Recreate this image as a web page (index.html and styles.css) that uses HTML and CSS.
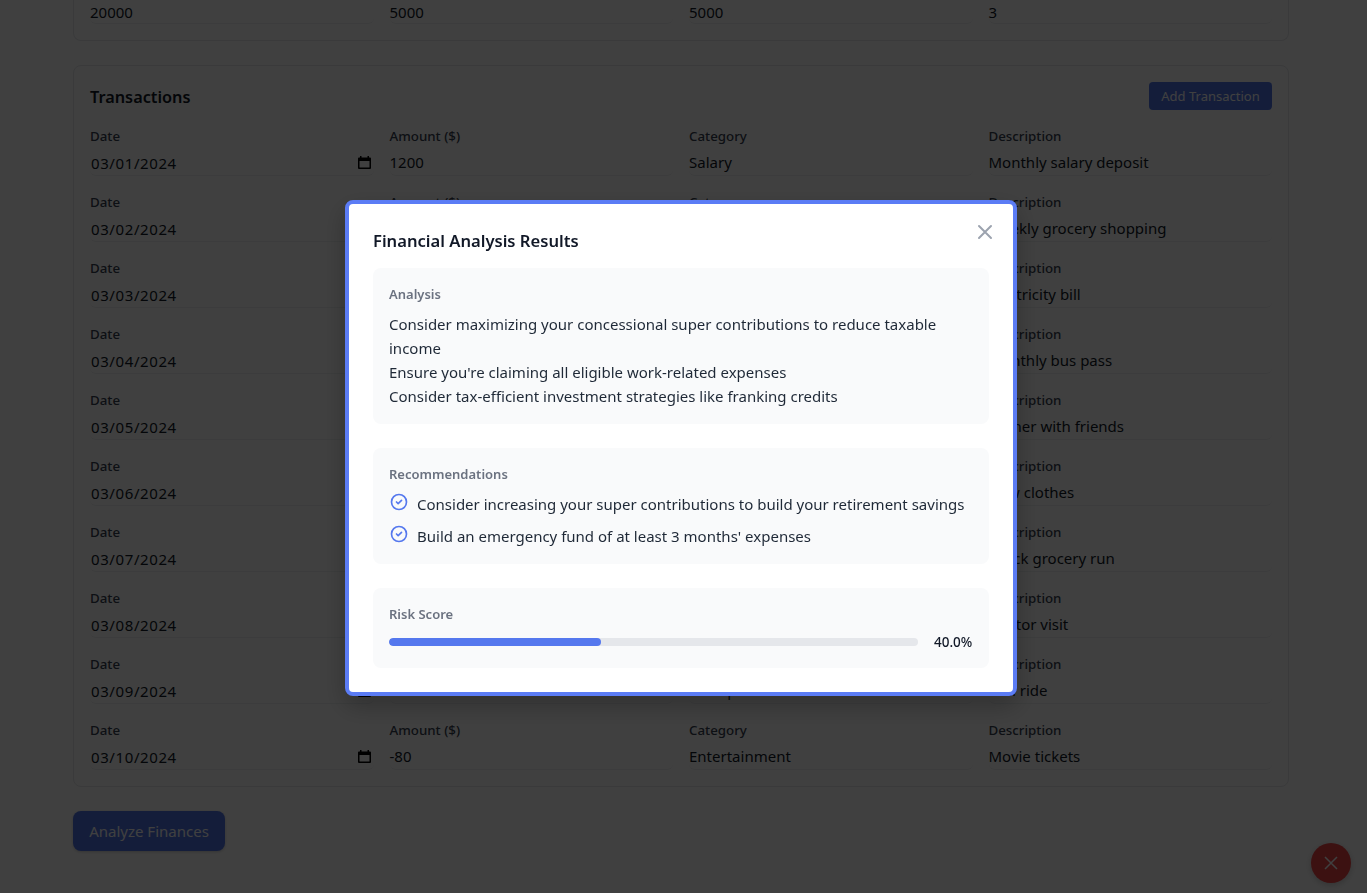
FILE: index.html
```html
<!DOCTYPE html>
<html lang="en">
<head>
<meta charset="utf-8">
<title>Financial Analysis</title>
<link rel="stylesheet" href="styles.css">
</head>
<body>
<main class="page">
  <section class="card card-clipped">
    <div class="grid">
      <div class="input-text">20000</div>
      <div class="input-text">5000</div>
      <div class="input-text">5000</div>
      <div class="input-text">3</div>
    </div>
  </section>

  <section class="card">
    <div class="card-head">
      <h2>Transactions</h2>
      <button class="btn-small">Add Transaction</button>
    </div>
    <div class="rows">
      <div class="grid"><div class="field"><label>Date</label><div class="input-date"><span>03/01/2024</span><svg class="cal" viewBox="0 0 16 16"><path fill-rule="evenodd" d="M4 1h1.5v1.5h6V1H13v1.5h1a1 1 0 0 1 1 1V13a1 1 0 0 1-1 1H3a1 1 0 0 1-1-1V3.5a1 1 0 0 1 1-1h1V1zM3.5 6v6.5h10V6z"/></svg></div></div><div class="field"><label>Amount ($)</label><div class="input-text">1200</div></div><div class="field"><label>Category</label><div class="input-text">Salary</div></div><div class="field"><label>Description</label><div class="input-text">Monthly salary deposit</div></div></div>
      <div class="grid"><div class="field"><label>Date</label><div class="input-date"><span>03/02/2024</span><svg class="cal" viewBox="0 0 16 16"><path fill-rule="evenodd" d="M4 1h1.5v1.5h6V1H13v1.5h1a1 1 0 0 1 1 1V13a1 1 0 0 1-1 1H3a1 1 0 0 1-1-1V3.5a1 1 0 0 1 1-1h1V1zM3.5 6v6.5h10V6z"/></svg></div></div><div class="field"><label>Amount ($)</label><div class="input-text">-150</div></div><div class="field"><label>Category</label><div class="input-text">Groceries</div></div><div class="field"><label>Description</label><div class="input-text">Weekly grocery shopping</div></div></div>
      <div class="grid"><div class="field"><label>Date</label><div class="input-date"><span>03/03/2024</span><svg class="cal" viewBox="0 0 16 16"><path fill-rule="evenodd" d="M4 1h1.5v1.5h6V1H13v1.5h1a1 1 0 0 1 1 1V13a1 1 0 0 1-1 1H3a1 1 0 0 1-1-1V3.5a1 1 0 0 1 1-1h1V1zM3.5 6v6.5h10V6z"/></svg></div></div><div class="field"><label>Amount ($)</label><div class="input-text">-120</div></div><div class="field"><label>Category</label><div class="input-text">Utilities</div></div><div class="field"><label>Description</label><div class="input-text">Electricity bill</div></div></div>
      <div class="grid"><div class="field"><label>Date</label><div class="input-date"><span>03/04/2024</span><svg class="cal" viewBox="0 0 16 16"><path fill-rule="evenodd" d="M4 1h1.5v1.5h6V1H13v1.5h1a1 1 0 0 1 1 1V13a1 1 0 0 1-1 1H3a1 1 0 0 1-1-1V3.5a1 1 0 0 1 1-1h1V1zM3.5 6v6.5h10V6z"/></svg></div></div><div class="field"><label>Amount ($)</label><div class="input-text">-50</div></div><div class="field"><label>Category</label><div class="input-text">Transport</div></div><div class="field"><label>Description</label><div class="input-text">Monthly bus pass</div></div></div>
      <div class="grid"><div class="field"><label>Date</label><div class="input-date"><span>03/05/2024</span><svg class="cal" viewBox="0 0 16 16"><path fill-rule="evenodd" d="M4 1h1.5v1.5h6V1H13v1.5h1a1 1 0 0 1 1 1V13a1 1 0 0 1-1 1H3a1 1 0 0 1-1-1V3.5a1 1 0 0 1 1-1h1V1zM3.5 6v6.5h10V6z"/></svg></div></div><div class="field"><label>Amount ($)</label><div class="input-text">-75</div></div><div class="field"><label>Category</label><div class="input-text">Dining</div></div><div class="field"><label>Description</label><div class="input-text">Dinner with friends</div></div></div>
      <div class="grid"><div class="field"><label>Date</label><div class="input-date"><span>03/06/2024</span><svg class="cal" viewBox="0 0 16 16"><path fill-rule="evenodd" d="M4 1h1.5v1.5h6V1H13v1.5h1a1 1 0 0 1 1 1V13a1 1 0 0 1-1 1H3a1 1 0 0 1-1-1V3.5a1 1 0 0 1 1-1h1V1zM3.5 6v6.5h10V6z"/></svg></div></div><div class="field"><label>Amount ($)</label><div class="input-text">-200</div></div><div class="field"><label>Category</label><div class="input-text">Shopping</div></div><div class="field"><label>Description</label><div class="input-text">New clothes</div></div></div>
      <div class="grid"><div class="field"><label>Date</label><div class="input-date"><span>03/07/2024</span><svg class="cal" viewBox="0 0 16 16"><path fill-rule="evenodd" d="M4 1h1.5v1.5h6V1H13v1.5h1a1 1 0 0 1 1 1V13a1 1 0 0 1-1 1H3a1 1 0 0 1-1-1V3.5a1 1 0 0 1 1-1h1V1zM3.5 6v6.5h10V6z"/></svg></div></div><div class="field"><label>Amount ($)</label><div class="input-text">-45</div></div><div class="field"><label>Category</label><div class="input-text">Groceries</div></div><div class="field"><label>Description</label><div class="input-text">Quick grocery run</div></div></div>
      <div class="grid"><div class="field"><label>Date</label><div class="input-date"><span>03/08/2024</span><svg class="cal" viewBox="0 0 16 16"><path fill-rule="evenodd" d="M4 1h1.5v1.5h6V1H13v1.5h1a1 1 0 0 1 1 1V13a1 1 0 0 1-1 1H3a1 1 0 0 1-1-1V3.5a1 1 0 0 1 1-1h1V1zM3.5 6v6.5h10V6z"/></svg></div></div><div class="field"><label>Amount ($)</label><div class="input-text">-100</div></div><div class="field"><label>Category</label><div class="input-text">Healthcare</div></div><div class="field"><label>Description</label><div class="input-text">Doctor visit</div></div></div>
      <div class="grid"><div class="field"><label>Date</label><div class="input-date"><span>03/09/2024</span><svg class="cal" viewBox="0 0 16 16"><path fill-rule="evenodd" d="M4 1h1.5v1.5h6V1H13v1.5h1a1 1 0 0 1 1 1V13a1 1 0 0 1-1 1H3a1 1 0 0 1-1-1V3.5a1 1 0 0 1 1-1h1V1zM3.5 6v6.5h10V6z"/></svg></div></div><div class="field"><label>Amount ($)</label><div class="input-text">-30</div></div><div class="field"><label>Category</label><div class="input-text">Transport</div></div><div class="field"><label>Description</label><div class="input-text">Taxi ride</div></div></div>
      <div class="grid"><div class="field"><label>Date</label><div class="input-date"><span>03/10/2024</span><svg class="cal" viewBox="0 0 16 16"><path fill-rule="evenodd" d="M4 1h1.5v1.5h6V1H13v1.5h1a1 1 0 0 1 1 1V13a1 1 0 0 1-1 1H3a1 1 0 0 1-1-1V3.5a1 1 0 0 1 1-1h1V1zM3.5 6v6.5h10V6z"/></svg></div></div><div class="field"><label>Amount ($)</label><div class="input-text">-80</div></div><div class="field"><label>Category</label><div class="input-text">Entertainment</div></div><div class="field"><label>Description</label><div class="input-text">Movie tickets</div></div></div>
    </div>
  </section>

  <button class="btn-analyze">Analyze Finances</button>
</main>

<button class="fab" aria-label="Close">
  <svg viewBox="0 0 24 24"><path d="M6 18L18 6M6 6l12 12"/></svg>
</button>

<div class="overlay">
  <div class="modal">
    <button class="close" aria-label="Close">
      <svg viewBox="0 0 24 24"><path d="M6 18L18 6M6 6l12 12"/></svg>
    </button>
    <h3>Financial Analysis Results</h3>
    <div class="panel">
      <h4>Analysis</h4>
      <p>Consider maximizing your concessional super contributions to reduce taxable income</p>
      <p>Ensure you're claiming all eligible work-related expenses</p>
      <p>Consider tax-efficient investment strategies like franking credits</p>
    </div>
    <div class="panel">
      <h4>Recommendations</h4>
      <ul>
        <li><svg viewBox="0 0 24 24"><path d="M9 12l2 2 4-4m6 2a9 9 0 11-18 0 9 9 0 0118 0z"/></svg><span>Consider increasing your super contributions to build your retirement savings</span></li>
        <li><svg viewBox="0 0 24 24"><path d="M9 12l2 2 4-4m6 2a9 9 0 11-18 0 9 9 0 0118 0z"/></svg><span>Build an emergency fund of at least 3 months' expenses</span></li>
      </ul>
    </div>
    <div class="panel">
      <h4>Risk Score</h4>
      <div class="risk">
        <div class="track"><div class="fill" style="width:40%"></div></div>
        <span>40.0%</span>
      </div>
    </div>
  </div>
</div>
</body>
</html>
```
FILE: styles.css
```css
* { box-sizing: border-box; }
html, body { margin: 0; height: 100%; overflow: hidden; }
body { font-family: "Noto Sans", "Open Sans", sans-serif; color: #111827; background: #fff; font-size: 16px; }
.page { width: 1289px; padding-left: 73px; }
.card { width: 1216px; background: #fff; border: 1px solid #e5e7eb; border-radius: 8px; padding: 16px; margin-bottom: 24px; }
.card-clipped { height: 41px; padding-top: 0; border-top: 0; border-radius: 0 0 8px 8px; display: flex; align-items: flex-end; padding-bottom: 16px; margin-bottom: 24px; overflow: hidden; }
.card-clipped .grid { width: 100%; }
.card-clipped .input-text { line-height: 29px; }
.card-head { display: flex; justify-content: space-between; align-items: center; height: 28px; margin-bottom: 16px; }
h2 { margin: 2px 0 0; font-size: 16.3px; font-weight: 600; line-height: 28px; }
.btn-small { border: 0; height: 28px; width: 123px; padding: 0; background: #4f74e8; color: #fff; border-radius: 4px; font: 400 13px/20px "Noto Sans", sans-serif; }
.rows { display: flex; flex-direction: column; gap: 16px; }
.grid { display: grid; grid-template-columns: repeat(4, 1fr); gap: 16px; }
.field { display: flex; flex-direction: column; gap: 4px; }
label { font-size: 13.3px; line-height: 20px; font-weight: 500; color: #374151; }
.input-text, .input-date { height: 26px; font-size: 15px; border-bottom: 1px solid #eef0f3; border-radius: 6px; color: #111827; }
.input-text { line-height: 24px; }
.input-date { line-height: 26px; display: flex; justify-content: space-between; align-items: center; padding-left: 1px; }
.input-date span { letter-spacing: .6px; }
.cal { width: 16px; height: 16px; margin-right: 2px; fill: #000; flex: none; }
.btn-analyze { display: block; border: 0; width: 152px; height: 40px; background: #4f74e8; color: #fff; border-radius: 8px; font: 400 15px/24px "Noto Sans", sans-serif; box-shadow: 0 1px 3px rgba(0,0,0,.2); }
.fab { position: fixed; right: 16px; bottom: 10px; width: 40px; height: 40px; border: 0; border-radius: 50%; background: #ef4444; padding: 8px; box-shadow: 0 2px 6px rgba(0,0,0,.2); }
.fab svg { display: block; width: 24px; height: 24px; fill: none; stroke: #fff; stroke-width: 1.5; }
.overlay { position: fixed; inset: 0; background: rgba(0,0,0,.75); display: flex; justify-content: center; align-items: flex-start; padding: 200px 5px 0 0; }
.modal { position: relative; width: 672px; background: #fff; border: 4px solid #5b7cf5; border-radius: 8px; padding: 24px; box-shadow: 0 10px 25px rgba(0,0,0,.25); }
.close { position: absolute; top: 16px; right: 16px; width: 24px; height: 24px; padding: 0; border: 0; background: none; }
.close svg { display: block; width: 24px; height: 24px; fill: none; stroke: #9ca3af; stroke-width: 2; stroke-linecap: round; }
h3 { margin: 0 0 14px; font-size: 16.6px; font-weight: 600; line-height: 26px; color: #111827; }
.panel { background: #f9fafb; border-radius: 8px; padding: 16px; margin-bottom: 24px; }
.panel:last-child { margin-bottom: 0; }
h4 { margin: 0 0 8px; font-size: 13px; line-height: 20px; font-weight: 600; color: #6b7280; }
.panel p { margin: 0; font-size: 15px; line-height: 24px; color: #1f2937; }
ul { list-style: none; margin: 0; padding: 0; display: flex; flex-direction: column; gap: 8px; }
li { display: flex; gap: 8px; font-size: 15px; line-height: 24px; color: #1f2937; }
li svg { flex: none; width: 20px; height: 20px; fill: none; stroke: #5578ee; stroke-width: 2; stroke-linecap: round; stroke-linejoin: round; }
.risk { display: flex; align-items: center; gap: 16px; height: 20px; }
.track { flex: 1; height: 8px; background: #e5e7eb; border-radius: 4px; overflow: hidden; }
.fill { height: 100%; background: #5578ee; border-radius: 4px; }
.risk span { width: 39px; font-size: 13.5px; line-height: 20px; font-weight: 500; color: #111827; white-space: nowrap; }
```
